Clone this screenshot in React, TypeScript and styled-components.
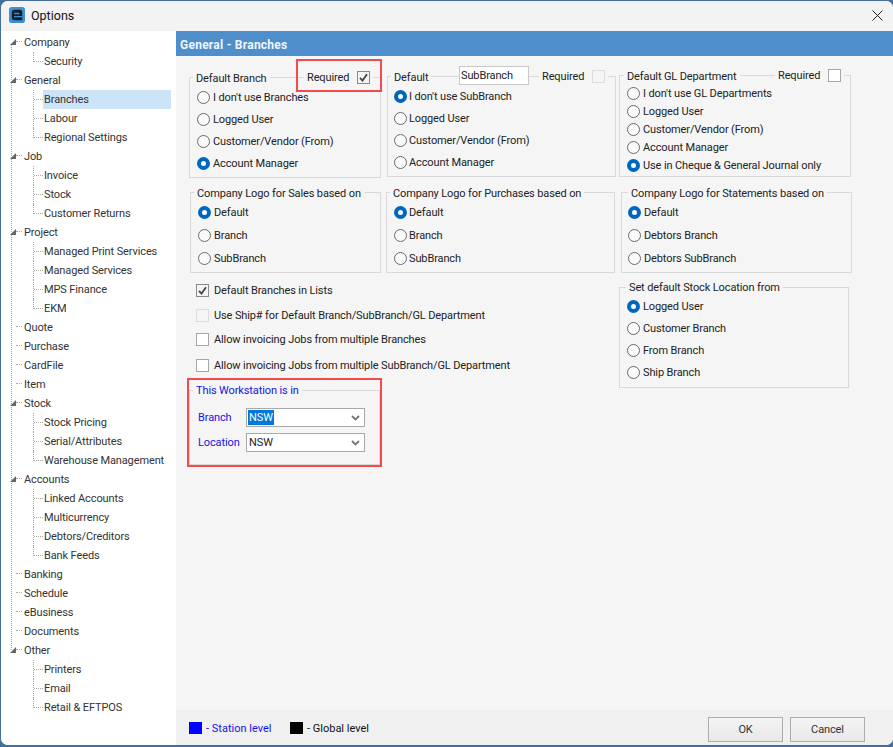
import React from "react";
import styled, { createGlobalStyle } from "styled-components";

const Global = createGlobalStyle`
  html, body { margin: 0; padding: 0; width: 893px; height: 747px; overflow: hidden; background: #46709c; }
  #root { height: 747px; }
  * { box-sizing: border-box; }
`;

const Win = styled.div`
  width: 892px; height: 744px; margin-left: 1px; margin-top: 1px;
  display: flex; flex-direction: column; overflow: hidden;
  border-radius: 7px;
  background: #f3f3f3;
  font-family: Roboto, sans-serif; font-size: 11px; letter-spacing: -0.12px; color: #222;
`;
const TitleBar = styled.div`
  height: 30px; flex: none; display: flex; align-items: center; padding: 0 9px 2px 8px; background: #f3f3f3;
`;
const Title = styled.span` font-size: 12.5px; letter-spacing: 0; margin-left: 6px; color: #111; flex: 1; `;
const CloseBtn = styled.svg` width: 11px; height: 11px; margin-right: 1px; flex: none; `;
const Body = styled.div` flex: 1; display: flex; min-height: 0; `;

const Side = styled.nav`
  width: 175px; flex: none; background: #fff; padding-top: 2px; position: relative;
  &::before { content: ""; position: absolute; left: 10px; top: 14px; height: 605px; border-left: 1px dotted #a8a8a8; }
`;
const TreeRow = styled.div<{ $child?: boolean; $last?: boolean }>`
  height: 19px; display: flex; align-items: center; position: relative;
  padding-left: ${p => (p.$child ? 42 : 22)}px; color: #333;
  ${p => p.$child ? `
    &::before { content: ""; position: absolute; left: 32px; top: 0; height: ${p.$last ? 10 : 19}px; border-left: 1px dotted #a8a8a8; }
    &::after { content: ""; position: absolute; left: 33px; width: 9px; top: 9px; border-top: 1px dotted #a8a8a8; }
  ` : `
    &::after { content: ""; position: absolute; left: 15px; width: 6px; top: 8px; border-top: 1px dotted #a8a8a8; }
  `}
`;
const Arrow = styled.i`
  position: absolute; left: 9px; top: 6px; width: 0; height: 0; z-index: 1;
  border-left: 6px solid transparent; border-bottom: 6px solid #666;
`;
const TreeLabel = styled.span<{ $sel?: boolean }>`
  height: 19px; line-height: 19px; padding-left: 1px; white-space: nowrap;
  ${p => p.$sel ? "width: 128px; background: #cce4f7;" : ""}
`;

const Main = styled.div` flex: 1; display: flex; flex-direction: column; min-width: 0; `;
const Header = styled.div`
  height: 25px; flex: none; background: #4d8ecb; color: #f2f6fb; font-weight: 700; font-size: 12px; letter-spacing: 0.25px;
  display: flex; align-items: center; padding: 2px 0 0 4px;
`;
const Content = styled.div` flex: 1; background: #f5f5f5; padding-left: 13px; min-height: 0; `;
const Row = styled.div<{ $mt: number }>` display: flex; align-items: flex-start; margin-top: ${p => p.$mt}px; `;
const Group = styled.div<{ $w: number; $h: number; $ml?: number; $mt?: number; $pt: number; $step: number; $px?: number }>`
  position: relative; flex: none; width: ${p => p.$w}px; height: ${p => p.$h}px;
  margin-left: ${p => p.$ml ?? 0}px; margin-top: ${p => p.$mt ?? 0}px;
  border: 1px solid #d9d9d9; padding: ${p => p.$pt}px 0 0 ${p => p.$px ?? 7}px;
  display: grid; grid-auto-rows: ${p => p.$step}px; align-content: start;
`;
const Legend = styled.span<{ $x: number; $top?: number; $blue?: boolean }>`
  position: absolute; left: ${p => p.$x}px; top: ${p => p.$top ?? -8}px; height: 17px; line-height: 17px; padding: 0 3px;
  background: #f5f5f5; white-space: nowrap; color: ${p => (p.$blue ? "#1414e6" : "#222")};
`;
const RadioRow = styled.label<{ $gap: number }>` display: flex; align-items: center; gap: ${p => p.$gap}px; white-space: nowrap; `;
const RadioDot = styled.span<{ $on?: boolean }>`
  width: 13px; height: 13px; border-radius: 50%; flex: none; background: ${p => (p.$on ? "#fff" : "#fafafa")};
  border: ${p => (p.$on ? "4px solid #0067c0" : "1px solid #6a6a6a")};
`;
const Box = styled.span<{ $off?: boolean; $on?: boolean }>`
  width: 13px; height: 13px; flex: none; display: inline-flex; align-items: center; justify-content: center;
  background: ${p => (p.$off ? "#f5f5f5" : p.$on ? "#f4f4f4" : "#fff")};
  border: 1px solid ${p => (p.$off ? "#dcdcdc" : p.$on ? "#8a8a8a" : "#a6a6a6")};
`;
const Tick = styled.svg` width: 9px; height: 9px; `;
const ReqWrap = styled.span<{ $x: number }>`
  position: absolute; left: ${p => p.$x}px; top: -9px; display: flex; align-items: center; justify-content: space-between;
  width: 69px; background: #f5f5f5; padding: 0 3px; height: 17px; white-space: nowrap;
`;
const RedFrame = styled.div`
  position: absolute; left: 106px; top: -19px; width: 86px; height: 33px; border: 2px solid #f44a4a; pointer-events: none;
`;
const NameInput = styled.span`
  position: absolute; left: 71px; top: -11px; width: 70px; height: 19px; background: #fff; border: 1px solid #c8c8c8;
  padding-left: 1px; line-height: 17px; color: #222;
`;
const Left = styled.div` width: 430px; flex: none; `;
const CheckList = styled.div` padding: 5px 0 0 7px; `;
const CheckRow = styled.label<{ $h: number }>` height: ${p => p.$h}px; display: flex; align-items: center; gap: 5px; white-space: nowrap; `;
const RedBox = styled.div`
  width: 195px; height: 89px; margin-left: -2px; border: 2px solid #f44a4a; padding-top: 10px;
`;
const Work = styled.div`
  position: relative; width: 191px; height: 75px; border: 1px solid #d9d9d9; padding: 17px 0 0 8px;
  display: flex; flex-direction: column; gap: 6px;
`;
const Field = styled.div` display: flex; align-items: center; height: 19px; color: #1414e6; `;
const FieldLabel = styled.span` width: 48px; flex: none; `;
const Combo = styled.div`
  width: 119px; height: 19px; border: 1px solid #a9a9a9; background: #fff; color: #222; display: flex; align-items: center; padding-left: 1px;
`;
const ComboText = styled.span<{ $sel?: boolean }>`
  flex: 1; line-height: 15px;
  & > b { font-weight: 400; display: inline-block; padding: 0 1px; ${p => p.$sel ? "background:#0078d7;color:#fff;" : ""} }
`;
const Chevron = styled.svg` width: 9px; height: 6px; margin-right: 4px; `;
const Footer = styled.div`
  height: 35px; flex: none; background: #f0f0f0; display: flex; align-items: center; padding: 0 28px 0 13px;
`;
const Swatch = styled.span<{ $c: string }>` width: 13px; height: 12px; background: ${p => p.$c}; flex: none; margin-right: 4px; `;
const LegendText = styled.span<{ $c: string; $w: number }>` color: ${p => p.$c}; width: ${p => p.$w}px; flex: none; padding-top: 1px; letter-spacing: 0; `;
const Spacer = styled.div` flex: 1; `;
const Btn = styled.button`
  width: 75px; height: 25px; margin-left: 7px; margin-top: 4px; border: 1px solid #adadad; background: linear-gradient(#f4f4f4, #e8e8e8);
  font: inherit; letter-spacing: inherit; color: #333; padding: 0;
`;

const tree: [string, string[]][] = [
  ["Company", ["Security"]],
  ["General", ["Branches", "Labour", "Regional Settings"]],
  ["Job", ["Invoice", "Stock", "Customer Returns"]],
  ["Project", ["Managed Print Services", "Managed Services", "MPS Finance", "EKM"]],
  ["Quote", []], ["Purchase", []], ["CardFile", []], ["Item", []],
  ["Stock", ["Stock Pricing", "Serial/Attributes", "Warehouse Management"]],
  ["Accounts", ["Linked Accounts", "Multicurrency", "Debtors/Creditors", "Bank Feeds"]],
  ["Banking", []], ["Schedule", []], ["eBusiness", []], ["Documents", []],
  ["Other", ["Printers", "Email", "Retail & EFTPOS"]],
];

const TickIcon = () => (
  <Tick viewBox="0 0 9 9"><path d="M1 4.8 L3.5 7.5 L8 1.2" fill="none" stroke="#444" strokeWidth="1.8" /></Tick>
);
const Radios = ({ items, on, gap = 3 }: { items: string[]; on: number; gap?: number }) => (
  <>
    {items.map((t, i) => (
      <RadioRow key={t} $gap={gap}><RadioDot $on={i === on} />{t}</RadioRow>
    ))}
  </>
);
const Chev = () => (
  <Chevron viewBox="0 0 9 6"><path d="M1 1 L4.5 4.5 L8 1" fill="none" stroke="#777" strokeWidth="1.8" /></Chevron>
);

export default function App() {
  return (
    <Win>
      <Global />
      <TitleBar>
        <svg width="16" height="16" viewBox="0 0 17 17">
          <rect width="17" height="17" rx="3" fill="#3f8fd2" />
          <path d="M3 5.5 Q3 3 5.5 3 H11.5 Q14 3 14 5.5 V14 H5.5 Q3 14 3 11.5 Z" fill="#10202e" />
          <path d="M5.5 6 H11 V7.6 H5.5 Z M5.5 9.6 H14 V11 H6 V12 H5.5 Z" fill="#3f8fd2" />
        </svg>
        <Title>Options</Title>
        <CloseBtn viewBox="0 0 11 11"><path d="M.5.5 L10.5 10.5 M10.5.5 L.5 10.5" stroke="#222" strokeWidth="1" fill="none" /></CloseBtn>
      </TitleBar>
      <Body>
        <Side>
          {tree.map(([p, kids]) => (
            <React.Fragment key={p}>
              <TreeRow><Arrow hidden={kids.length === 0} /><TreeLabel>{p}</TreeLabel></TreeRow>
              {kids.map((k, i) => (
                <TreeRow key={k} $child $last={i === kids.length - 1}>
                  <TreeLabel $sel={k === "Branches"}>{k}</TreeLabel>
                </TreeRow>
              ))}
            </React.Fragment>
          ))}
        </Side>
        <Main>
          <Header>General - Branches</Header>
          <Content>
            <Row $mt={20}>
              <Group $w={192} $h={101} $mt={1} $pt={8} $step={22}>
                <Legend $x={3}>Default Branch</Legend>
                <ReqWrap $x={114}>Required<Box $on><TickIcon /></Box></ReqWrap>
                <RedFrame />
                <Radios items={["I don't use Branches", "Logged User", "Customer/Vendor (From)", "Account Manager"]} on={3} />
              </Group>
              <Group $w={229} $h={101} $ml={6} $pt={8} $step={22} $px={6}>
                <Legend $x={3}>Default</Legend>
                <NameInput>SubBranch</NameInput>
                <ReqWrap $x={151}>Required<Box $off /></ReqWrap>
                <Radios gap={2} items={["I don't use SubBranch", "Logged User", "Customer/Vendor (From)", "Account Manager"]} on={0} />
              </Group>
              <Group $w={232} $h={102} $ml={3} $mt={-1} $pt={8} $step={18}>
                <Legend $x={4}>Default GL Department</Legend>
                <ReqWrap $x={155}>Required<Box /></ReqWrap>
                <Radios items={["I don't use GL Departments", "Logged User", "Customer/Vendor (From)", "Account Manager", "Use in Cheque & General Journal only"]} on={4} />
              </Group>
            </Row>
            <Row $mt={14}>
              <Group $w={191} $h={81} $ml={1} $pt={8} $step={23}>
                <Legend $x={3}>Company Logo for Sales based on</Legend>
                <Radios items={["Default", "Branch", "SubBranch"]} on={0} />
              </Group>
              <Group $w={229} $h={81} $ml={5} $pt={8} $step={23} $px={7}>
                <Legend $x={3}>Company Logo for Purchases based on</Legend>
                <Radios gap={2} items={["Default", "Branch", "SubBranch"]} on={0} />
              </Group>
              <Group $w={231} $h={81} $ml={6} $pt={8} $step={23} $px={6}>
                <Legend $x={6}>Company Logo for Statements based on</Legend>
                <Radios items={["Default", "Debtors Branch", "Debtors SubBranch"]} on={0} />
              </Group>
            </Row>
            <Row $mt={0}>
              <Left>
                <CheckList>
                  <CheckRow $h={25}><Box $on><TickIcon /></Box>Default Branches in Lists</CheckRow>
                  <CheckRow $h={24}><Box $off />Use Ship# for Default Branch/SubBranch/GL Department</CheckRow>
                  <CheckRow $h={25}><Box />Allow invoicing Jobs from multiple Branches</CheckRow>
                  <CheckRow $h={26}><Box />Allow invoicing Jobs from multiple SubBranch/GL Department</CheckRow>
                </CheckList>
                <RedBox>
                  <Work>
                    <Legend $x={3} $top={-9} $blue>This Workstation is in</Legend>
                    <Field><FieldLabel>Branch</FieldLabel><Combo><ComboText $sel><b>NSW</b></ComboText><Chev /></Combo></Field>
                    <Field><FieldLabel>Location</FieldLabel><Combo><ComboText><b>NSW</b></ComboText><Chev /></Combo></Field>
                  </Work>
                </RedBox>
              </Left>
              <Group $w={230} $h={101} $mt={14} $pt={7} $step={22}>
                <Legend $x={6} $top={-9}>Set default Stock Location from</Legend>
                <Radios items={["Logged User", "Customer Branch", "From Branch", "Ship Branch"]} on={0} />
              </Group>
            </Row>
          </Content>
          <Footer>
            <Swatch $c="#0000ff" /><LegendText $c="#1414e6" $w={84}>- Station level</LegendText>
            <Swatch $c="#000" /><LegendText $c="#111" $w={80}>- Global level</LegendText>
            <Spacer />
            <Btn>OK</Btn><Btn>Cancel</Btn>
          </Footer>
        </Main>
      </Body>
    </Win>
  );
}
